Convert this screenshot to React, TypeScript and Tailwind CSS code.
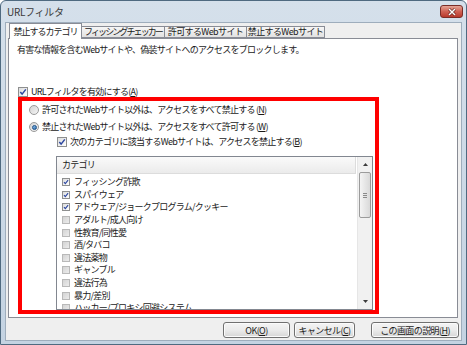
import React from "react";

const CATEGORIES = [
  { label: "フィッシング詐欺", checked: true },
  { label: "スパイウェア", checked: true },
  { label: "アドウェア/ジョークプログラム/クッキー", checked: true },
  { label: "アダルト/成人向け", checked: false },
  { label: "性教育/同性愛", checked: false },
  { label: "酒/タバコ", checked: false },
  { label: "違法薬物", checked: false },
  { label: "ギャンブル", checked: false },
  { label: "違法行為", checked: false },
  { label: "暴力/差別", checked: false },
  { label: "ハッカー/プロキシ回避システム", checked: false },
];

function CheckBox({ checked, small }: { checked: boolean; small?: boolean }) {
  const size = small ? "h-[8px] w-[8px]" : "h-[10px] w-[10px]";
  const look = checked
    ? "border-[#8e8f8f] bg-gradient-to-br from-[#dcdcdc] to-white"
    : "border-[#b9b9b9] bg-gradient-to-br from-[#d4d4d4] to-[#ececec]";
  return (
    <span className={`flex shrink-0 items-center justify-center border ${size} ${look}`}>
      {checked && (
        <svg viewBox="0 0 8 8" className="h-full w-full">
          <path d="M1.3 4.1 L3.1 6.1 L6.8 1.4" fill="none" stroke="#2c47a0" strokeWidth="1.5" />
        </svg>
      )}
    </span>
  );
}

function Radio({ selected }: { selected: boolean }) {
  return (
    <span className="flex h-[10px] w-[10px] shrink-0 items-center justify-center rounded-full border border-[#9a9a9a] bg-gradient-to-br from-[#d2d2d2] to-[#f6f6f6]">
      {selected && (
        <span className="h-[5px] w-[5px] rounded-full border border-[#1c4f86] bg-gradient-to-br from-[#8fc4ef] to-[#2b69ad]" />
      )}
    </span>
  );
}

function Btn({ w, children }: { w: string; children: React.ReactNode }) {
  return (
    <button
      className={`flex h-[16px] items-center justify-center rounded-[3px] border border-[#707070] bg-gradient-to-b from-[#f4f4f4] via-[#ebebeb] to-[#d6d6d6] text-[9px] leading-none tracking-[-0.6px] text-[#1a1a1a] shadow-[inset_0_0_0_1px_#fbfbfb] ${w}`}
    >
      {children}
    </button>
  );
}

export default function App() {
  return (
    <div className="relative h-[345px] w-[467px] overflow-hidden bg-white font-['Noto_Sans_CJK_JP','Liberation_Sans',sans-serif] text-[#1a1a1a]">
      <div className="flex h-[345px] w-[467px] flex-col rounded-t-[6px] border border-[#4f6a80] bg-gradient-to-b from-[#d5e0eb] to-[#c4d3e2]">
        {/* Title bar */}
        <div className="flex h-[21px] shrink-0 items-center justify-between pl-[6px] pr-[3px]">
          <span className="text-[10px] tracking-[-0.3px] text-[#3a3a3a]">URLフィルタ</span>
          <span className="flex h-[13px] w-[23px] items-center justify-center rounded-[3px] border border-[#7a2d27] bg-gradient-to-b from-[#e4a496] via-[#cf6154] to-[#b8382c]">
            <svg viewBox="0 0 10 8" className="h-[8px] w-[10px]">
              <path d="M2 1 L8 7 M8 1 L2 7" stroke="#5a1a14" strokeWidth="2.6" />
              <path d="M2 1 L8 7 M8 1 L2 7" stroke="#ffffff" strokeWidth="1.5" />
            </svg>
          </span>
        </div>

        {/* Client area */}
        <div className="mx-[4px] mb-[3px] flex flex-1 flex-col border border-[#9eadbc] bg-[#efefef] text-[9px] leading-[12px] tracking-[-0.75px]">
          {/* Tabs */}
          <div className="flex h-[15px] shrink-0 items-end pl-[3px] tracking-[-1px]">
            <div className="relative z-10 -mb-[1px] flex h-[16px] w-[73px] items-center justify-center border border-b-0 border-[#898c95] bg-white">
              禁止するカテゴリ
            </div>
            <div className="flex h-[12px] w-[83px] items-center justify-center border border-l-0 border-[#898c95] bg-gradient-to-b from-[#f6f6f6] to-[#e2e2e2] tracking-[-1.9px]">
              フィッシングチェッカー
            </div>
            <div className="flex h-[12px] w-[82px] items-center justify-center border border-l-0 border-[#898c95] bg-gradient-to-b from-[#f6f6f6] to-[#e2e2e2] tracking-[-0.6px]">
              許可するWebサイト
            </div>
            <div className="flex h-[12px] w-[78px] items-center justify-center border border-l-0 border-[#898c95] bg-gradient-to-b from-[#f6f6f6] to-[#e2e2e2] tracking-[-0.6px]">
              禁止するWebサイト
            </div>
          </div>

          {/* Tab panel */}
          <div className="ml-[2px] mr-[3px] flex h-[280px] shrink-0 flex-col border border-[#898c95] bg-white">
            <div className="mt-[5px] flex h-[12px] items-center pl-[8px] whitespace-nowrap">
              有害な情報を含むWebサイトや、偽装サイトへのアクセスをブロックします。
            </div>

            <div className="mt-[30px] ml-[9px] flex h-[12px] items-center gap-[3px] whitespace-nowrap">
              <CheckBox checked />
              <span>
                URLフィルタを有効にする(<u>A</u>)
              </span>
            </div>

            <div className="mt-[6px] ml-[20px] flex h-[12px] items-center gap-[3px] whitespace-nowrap">
              <Radio selected={false} />
              <span>
                許可されたWebサイト以外は、アクセスをすべて禁止する&nbsp;(<u>N</u>)
              </span>
            </div>

            <div className="mt-[5px] ml-[20px] flex h-[12px] items-center gap-[3px] whitespace-nowrap">
              <Radio selected />
              <span>
                禁止されたWebサイト以外は、アクセスをすべて許可する&nbsp;(<u>W</u>)
              </span>
            </div>

            <div className="mt-[3px] ml-[48px] flex h-[12px] items-center gap-[3px] whitespace-nowrap">
              <CheckBox checked />
              <span>
                次のカテゴリに該当するWebサイトは、アクセスを禁止する(<u>B</u>)
              </span>
            </div>

            {/* List box */}
            <div className="mt-[8px] ml-[47px] flex h-[154px] w-[317px] border border-[#828790] bg-white">
              <div className="flex flex-1 flex-col overflow-hidden pr-[1px]">
                <div className="flex h-[17px] shrink-0 items-center border-r border-b border-[#dcdcdc] bg-gradient-to-b from-[#fafafa] to-[#ebebeb] pl-[5px]">
                  カテゴリ
                </div>
                <div className="flex flex-col pt-[2px]">
                  {CATEGORIES.map((c) => (
                    <div key={c.label} className="flex h-[12.6px] shrink-0 items-center gap-[4px] pl-[5px] whitespace-nowrap">
                      <CheckBox checked={c.checked} small />
                      <span>{c.label}</span>
                    </div>
                  ))}
                </div>
              </div>

              {/* Scrollbar */}
              <div className="flex w-[15px] shrink-0 flex-col border-l border-[#e6e6e6] bg-[#f1f1f1]">
                <div className="flex h-[15px] items-center justify-center">
                  <svg viewBox="0 0 5 3" className="h-[3px] w-[5px]">
                    <path d="M0 3 L2.5 0 L5 3 Z" fill="#3c3c3c" />
                  </svg>
                </div>
                <div className="mx-[1px] flex h-[46px] flex-col items-center justify-center gap-[1px] rounded-[2px] border border-[#9b9b9b] bg-gradient-to-r from-[#f4f4f4] to-[#d9d9d9]">
                  <span className="h-px w-[4px] bg-[#8a8a8a]" />
                  <span className="h-px w-[4px] bg-[#8a8a8a]" />
                  <span className="h-px w-[4px] bg-[#8a8a8a]" />
                </div>
                <div className="flex-1" />
                <div className="flex h-[15px] items-center justify-center">
                  <svg viewBox="0 0 5 3" className="h-[3px] w-[5px]">
                    <path d="M0 0 L2.5 3 L5 0 Z" fill="#3c3c3c" />
                  </svg>
                </div>
              </div>
            </div>
          </div>

          {/* Buttons */}
          <div className="mt-[4px] flex h-[16px] justify-end pr-[2px]">
            <Btn w="w-[67px]">
              OK(<u>O</u>)
            </Btn>
            <div className="w-[4px]" />
            <Btn w="w-[61px]">
              キャンセル(<u>C</u>)
            </Btn>
            <div className="w-[16px]" />
            <Btn w="w-[88px]">
              この画面の説明(<u>H</u>)
            </Btn>
          </div>
        </div>
      </div>

      {/* Red highlight overlay */}
      <div className="pointer-events-none absolute left-[18px] top-[97px] h-[217px] w-[361px] border-[4px] border-[#ff0000]" />
    </div>
  );
}
